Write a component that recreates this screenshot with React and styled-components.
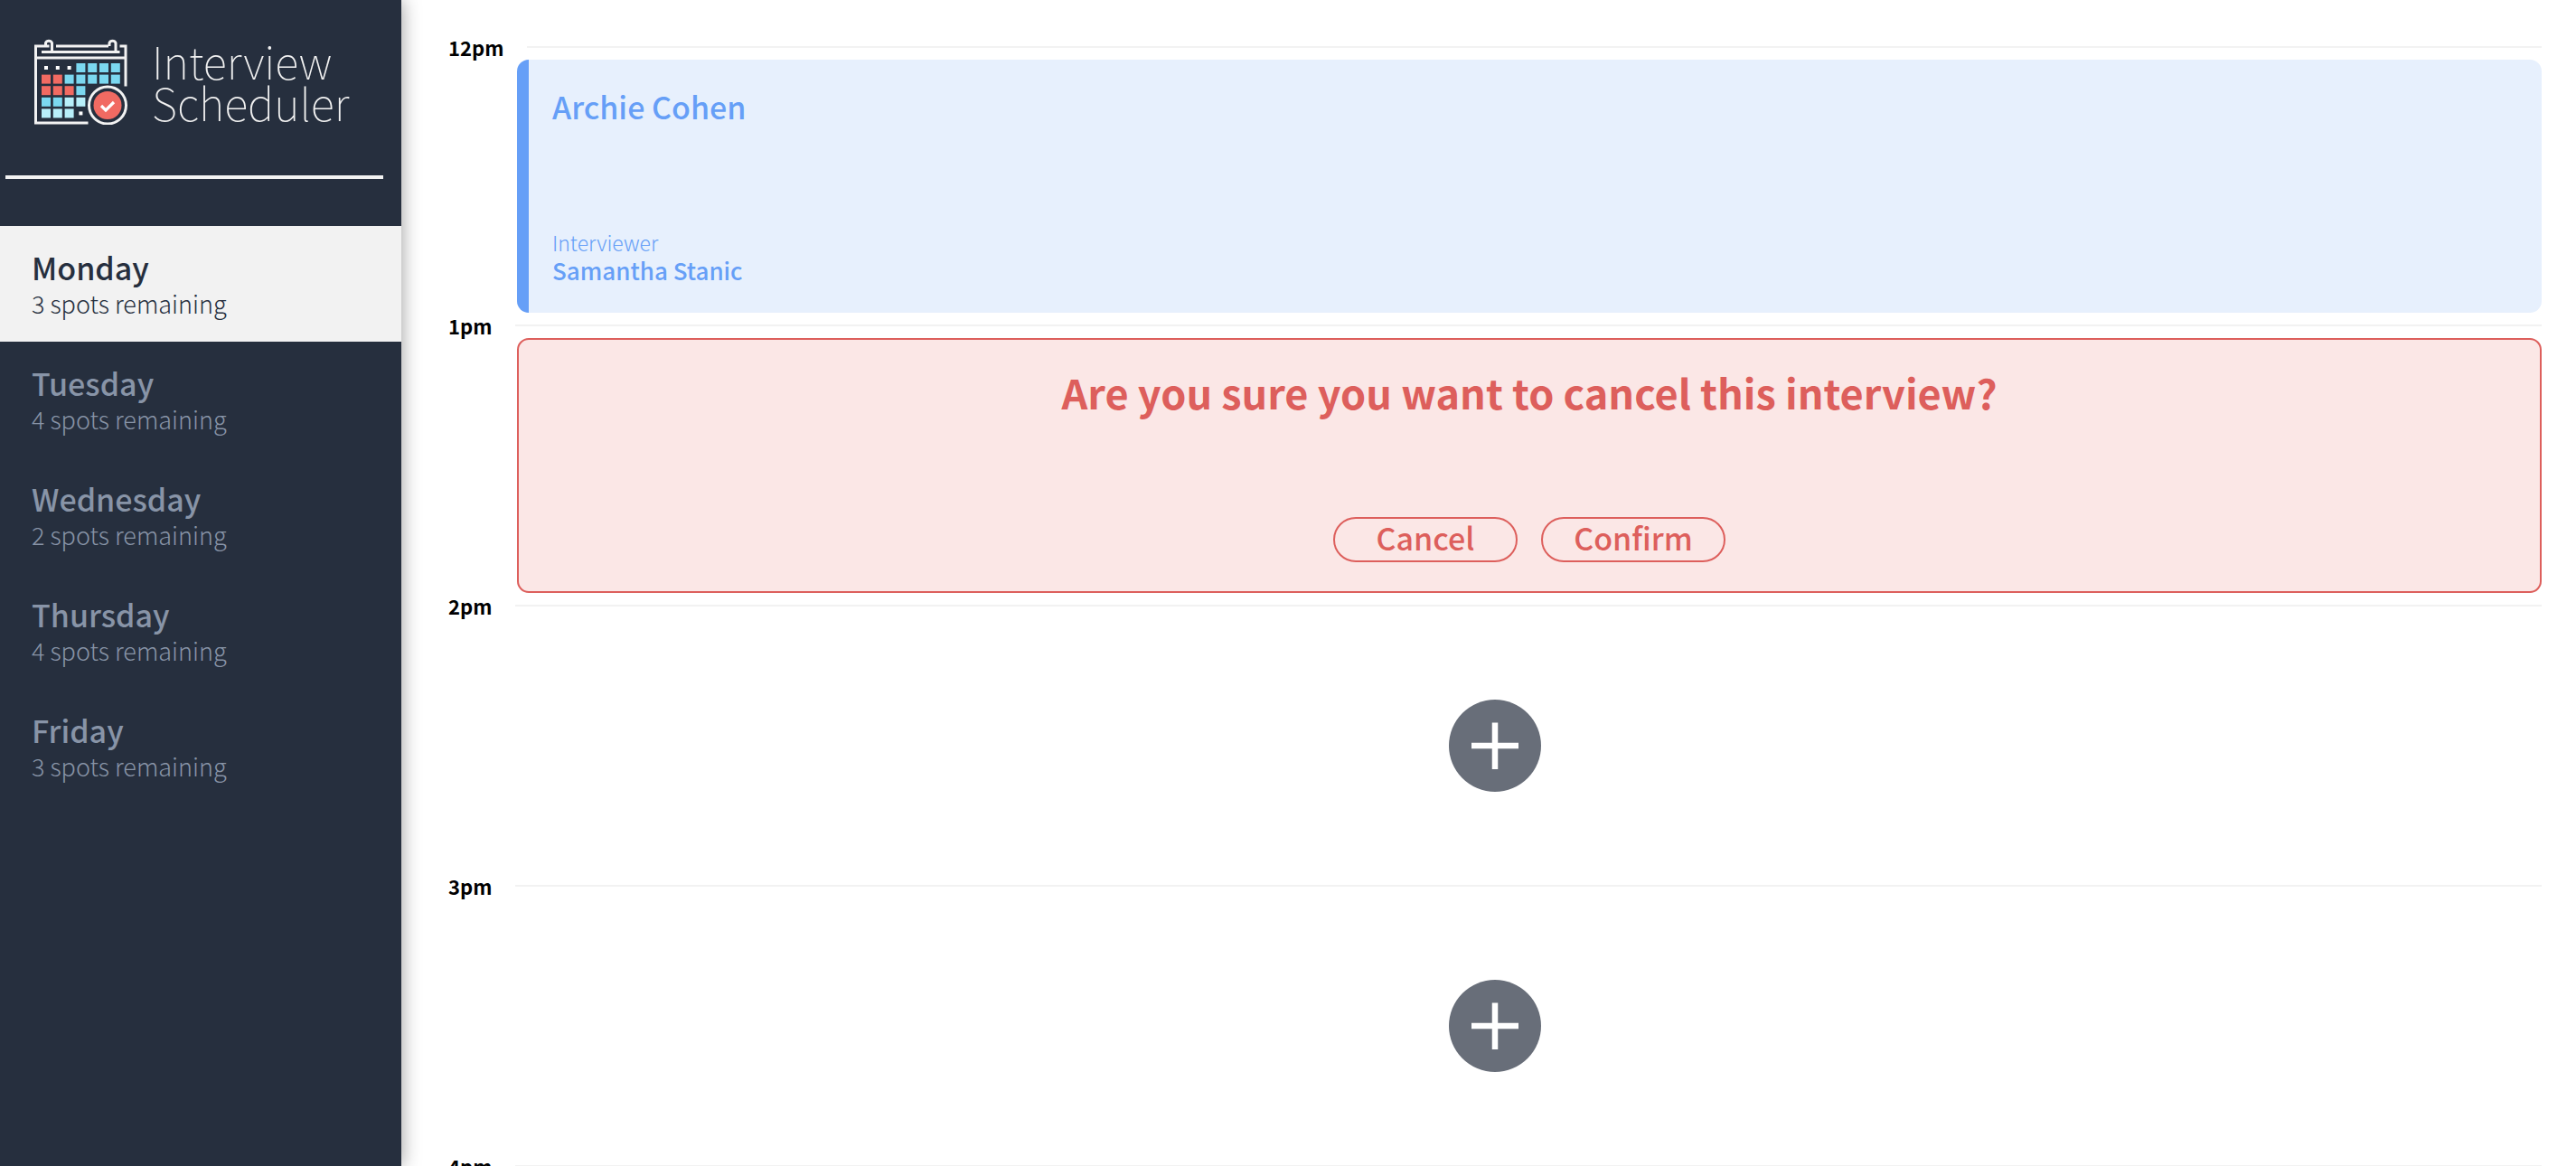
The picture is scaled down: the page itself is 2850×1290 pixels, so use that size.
import React from "react";
import styled, { createGlobalStyle, css } from "styled-components";

const fonts = '"Source Sans Pro", "Noto Sans CJK SC", sans-serif';

const GlobalStyle = createGlobalStyle`
  *, *::before, *::after { box-sizing: border-box; }
  body {
    margin: 0;
    background: #fff;
    color: #000;
    font-family: ${fonts};
    -webkit-font-smoothing: antialiased;
  }
  button { font: inherit; cursor: pointer; }
  h1, h2, h3, h4, p, ul { margin: 0; padding: 0; }
`;

const Layout = styled.div`
  display: flex;
  height: 100vh;
  overflow: hidden;
`;

const Sidebar = styled.aside`
  flex: 0 0 444px;
  background: #262f3e;
  box-shadow: 0 0 20px rgba(0, 0, 0, 0.4);
`;

const Brand = styled.div`
  display: flex;
  align-items: center;
  gap: 26px;
  height: 194px;
  padding: 0 0 14px 38px;
`;

const BrandName = styled.h1`
  font-size: 49px;
  font-weight: 100;
  line-height: 46px;
  color: #f2f2f2;
`;

const Divider = styled.hr`
  height: 4px;
  margin: 0 20px 52px 6px;
  border: 0;
  background: #f2f2f2;
`;

const DayList = styled.ul`
  list-style: none;
`;

const DayButton = styled.button`
  display: block;
  width: 100%;
  height: 128px;
  padding: 2px 35px 0;
  border: 0;
  text-align: left;
  background: transparent;
  color: #8894a7;
  ${(p) => p.$selected && css`
    background: #f2f2f2;
    color: #262f3e;
  `}
`;

const DayName = styled.span`
  display: block;
  font-size: 34px;
  font-weight: 500;
  line-height: 42px;
`;

const DaySpots = styled.span`
  display: block;
  font-size: 27px;
  font-weight: 300;
  line-height: 38px;
`;

const Schedule = styled.main`
  flex: 1;
  min-width: 0;
  padding: 38px 38px 0 52px;
`;

const SlotHeader = styled.header`
  display: flex;
  align-items: center;
  gap: 26px;
  height: 28px;
`;

const Time = styled.h4`
  font-size: 22px;
  font-weight: 700;
  line-height: 28px;
`;

const Rule = styled.hr`
  flex: 1;
  height: 2px;
  margin: 0;
  border: 0;
  background: #f2f2f2;
`;

const Card = styled.article`
  display: flex;
  flex-direction: column;
  justify-content: space-between;
  margin-left: 76px;
  border-radius: 13px;
`;

const Appointment = styled(Card)`
  height: 280px;
  padding: 28px 26px 30px;
  border-left: 13px solid #669ff7;
  background: #e7f0fd;
  color: #669ff7;
`;

const Student = styled.h2`
  font-size: 34px;
  font-weight: 500;
  line-height: 48px;
`;

const InterviewerLabel = styled.h4`
  font-size: 23px;
  font-weight: 300;
  line-height: 28px;
`;

const InterviewerName = styled.h3`
  font-size: 26px;
  font-weight: 500;
  line-height: 34px;
`;

const Confirmation = styled(Card)`
  align-items: center;
  height: 282px;
  padding: 30px 32px 32px;
  border: 2px solid #dd5f5c;
  background: #fbe7e6;
  color: #dd5f5c;
`;

const Question = styled.h2`
  font-size: 45px;
  font-weight: 700;
  line-height: 56px;
`;

const Actions = styled.div`
  display: flex;
  gap: 26px;
`;

const ActionButton = styled.button`
  width: 204px;
  height: 50px;
  padding: 0 0 4px;
  border: 2px solid #dd5f5c;
  border-radius: 25px;
  background: transparent;
  color: #dd5f5c;
  font-size: 34px;
  font-weight: 500;
  line-height: 42px;
`;

const EmptySlot = styled.div`
  display: flex;
  align-items: center;
  justify-content: center;
  height: 282px;
`;

const AddButton = styled.button`
  display: block;
  padding: 0;
  border: 0;
  border-radius: 50%;
  background: transparent;

  svg { display: block; }
`;

const days = [
  { name: "Monday", spots: 3 },
  { name: "Tuesday", spots: 4 },
  { name: "Wednesday", spots: 2 },
  { name: "Thursday", spots: 4 },
  { name: "Friday", spots: 3 },
];

const R = "#f16a62";
const B = "#7bd8f0";
const L = "#b8effa";
const W = "dot";
const cells = [
  [W, W, W, B, B, B, B],
  [R, R, B, B, B, B, B],
  [R, R, R, B],
  [B, B, L, L],
  [L, L, L, W],
];

function CalendarLogo() {
  return (
    <svg width="104" height="96" viewBox="38 43 104 96" fill="none" aria-hidden="true">
      <g stroke="#f2f2f2" strokeWidth="3">
        <path d="M97.500 137H39.500V52H54.500M62 52H120M132.500 52H139V96.500M39.500 65H139M46 58.500H132.500" />
        <path d="M50.500 52V48.500A3.800 3.800 0 0 1 57.500 48.500V58.500M121 52V48.500A3.800 3.800 0 0 1 128 48.500V58.500" />
        <circle cx="119" cy="117.500" r="20.500" />
      </g>
      {cells.map((row, y) =>
        row.map((fill, x) =>
          fill === W ? (
            <rect key={`${x}-${y}`} x={49 + x * 12.8} y={74 + y * 12.6} width="4" height="4" fill="#fff" />
          ) : (
            <rect key={`${x}-${y}`} x={46 + x * 12.8} y={71 + y * 12.6} width="10" height="10" fill={fill} />
          )
        )
      )}
      <circle cx="119" cy="117.500" r="15.500" fill={R} />
      <path d="M112 118L117 123L126 114" stroke="#fff" strokeWidth="3.200" />
    </svg>
  );
}

function AddIcon() {
  return (
    <svg width="102" height="102" viewBox="0 0 102 102" aria-hidden="true">
      <circle cx="51" cy="51" r="51" fill="#686e79" />
      <path d="M51 25.500V77M25 51H77" stroke="#fff" strokeWidth="6.500" />
    </svg>
  );
}

function Hour({ time, children }) {
  return (
    <section>
      <SlotHeader>
        <Time>{time}</Time>
        <Rule />
      </SlotHeader>
      {children}
    </section>
  );
}

function Empty() {
  return (
    <EmptySlot>
      <AddButton type="button" aria-label="Add">
        <AddIcon />
      </AddButton>
    </EmptySlot>
  );
}

export default function App() {
  return (
    <>
      <GlobalStyle />
      <Layout>
        <Sidebar>
          <Brand>
            <CalendarLogo />
            <BrandName>
              Interview
              <br />
              Scheduler
            </BrandName>
          </Brand>
          <Divider />
          <nav>
            <DayList>
              {days.map((day, i) => (
                <li key={day.name}>
                  <DayButton type="button" $selected={i === 0}>
                    <DayName>{day.name}</DayName>
                    <DaySpots>{day.spots} spots remaining</DaySpots>
                  </DayButton>
                </li>
              ))}
            </DayList>
          </nav>
        </Sidebar>
        <Schedule>
          <Hour time="12pm">
            <Appointment>
              <Student>Archie Cohen</Student>
              <div>
                <InterviewerLabel>Interviewer</InterviewerLabel>
                <InterviewerName>Samantha Stanic</InterviewerName>
              </div>
            </Appointment>
          </Hour>
          <Hour time="1pm">
            <Confirmation>
              <Question>Are you sure you want to cancel this interview?</Question>
              <Actions>
                <ActionButton type="button">Cancel</ActionButton>
                <ActionButton type="button">Confirm</ActionButton>
              </Actions>
            </Confirmation>
          </Hour>
          <Hour time="2pm"><Empty /></Hour>
          <Hour time="3pm"><Empty /></Hour>
          <Hour time="4pm" />
        </Schedule>
      </Layout>
    </>
  );
}
